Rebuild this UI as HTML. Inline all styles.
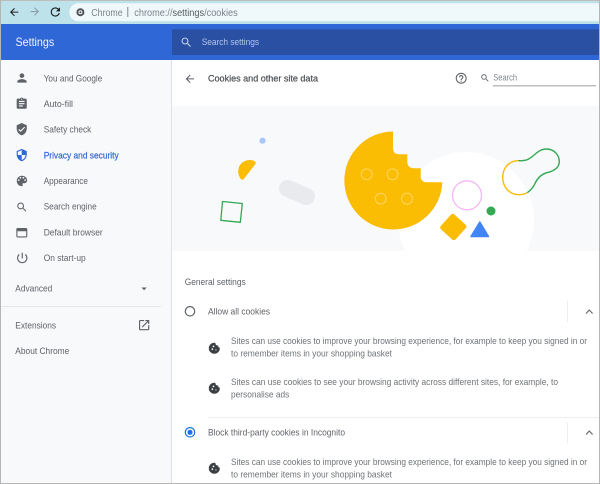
<!DOCTYPE html>
<html><head><meta charset="utf-8"><style>
html,body{margin:0;padding:0;width:600px;height:484px;overflow:hidden;background:#fff}
svg{display:block;position:absolute;left:0;top:0}
text{font-family:"Liberation Sans",sans-serif;font-size:9.4px;fill:#5f6368}
.t{filter:blur(.3px)}
</style></head><body>
<svg width="600" height="484" viewBox="0 0 600 484" xmlns="http://www.w3.org/2000/svg">
<defs>
<clipPath id="ill"><rect x="172" y="106" width="427" height="145"/></clipPath>
<path id="cookie" d="M21.95,10.99c-1.79-0.03-3.7-1.95-2.68-4.22c-2.98,1-5.77-1.59-5.19-4.56C6.95,0.71,2,6.58,2,12c0,5.52,4.48,10,10,10 C17.89,22,22.7,16.91,21.95,10.99z M8.5,15C7.67,15,7,14.33,7,13.5S7.67,12,8.5,12s1.5,0.67,1.5,1.5S9.33,15,8.5,15z M10.5,10 C9.67,10,9,9.33,9,8.5S9.67,7,10.5,7S12,7.67,12,8.5S11.33,10,10.5,10z M15,16c-0.55,0-1-0.45-1-1c0-0.55,0.45-1,1-1s1,0.45,1,1 C16,15.55,15.55,16,15,16z"/>
<path id="back" d="M20 11H7.83l5.59-5.59L12 4l-8 8 8 8 1.41-1.41L7.83 13H20v-2z"/>
<path id="srch" d="M15.5 14h-.79l-.28-.27C15.41 12.59 16 11.11 16 9.5 16 5.91 13.09 3 9.5 3S3 5.91 3 9.5 5.91 16 9.5 16c1.61 0 3.09-.59 4.23-1.57l.27.28v.79l5 4.99L20.49 19l-4.99-5zm-6 0C7.01 14 5 11.99 5 9.5S7.01 5 9.5 5 14 7.01 14 9.5 11.99 14 9.5 14z"/>
</defs>

<!-- frame backgrounds -->
<rect width="600" height="484" fill="#fff"/>
<rect x="0" y="0" width="600" height="24" fill="#bde2ea"/>
<rect x="69.300" y="3.300" width="540" height="18" rx="9" fill="#eff8fb"/>
<rect x="1" y="24" width="598" height="36" fill="#3067d6"/>
<rect x="172" y="29.300" width="427" height="25.700" fill="#2a50a3"/>
<rect x="1" y="60" width="170" height="424" fill="#f8f9fb"/>
<rect x="171" y="60" width="1" height="424" fill="#dfe1e5"/>
<rect x="172" y="106" width="427" height="145" fill="#f8f9fb"/>

<!-- toolbar icons -->
<use href="#back" transform="translate(7.900,5.900) scale(.52)" fill="#202124"/>
<use href="#back" transform="translate(41.100,17.800) scale(-.52,-.52)" fill="#8a9da6"/>
<path transform="translate(48.400,5) scale(.58)" d="M17.65 6.35C16.2 4.9 14.21 4 12 4c-4.42 0-7.99 3.58-7.99 8s3.57 8 7.99 8c3.73 0 6.84-2.55 7.73-6h-2.08c-.82 2.33-3.04 4-5.65 4-3.31 0-6-2.69-6-6s2.69-6 6-6c1.66 0 3.14.69 4.22 1.78L13 11h7V4l-2.35 2.35z" fill="#202124"/>
<circle cx="80.400" cy="12.200" r="3" fill="none" stroke="#4f5357" stroke-width="2"/>
<circle cx="80.400" cy="12.200" r="1" fill="#4f5357"/>
<rect x="127.300" y="7" width="1" height="10" fill="#80868b"/>

<!-- sidebar icons -->
<g fill="#5f6368">
<path transform="translate(15,71) scale(.58)" d="M12 12c2.21 0 4-1.79 4-4s-1.79-4-4-4-4 1.79-4 4 1.79 4 4 4zm0 2c-2.67 0-8 1.34-8 4v2h16v-2c0-2.66-5.33-4-8-4z"/>
<path transform="translate(15,97) scale(.56)" d="M19 3h-4.18C14.4 1.84 13.3 1 12 1c-1.3 0-2.4.84-2.82 2H5c-1.1 0-2 .9-2 2v14c0 1.1.9 2 2 2h14c1.1 0 2-.9 2-2V5c0-1.1-.9-2-2-2zm-7 0c.55 0 1 .45 1 1s-.45 1-1 1-1-.45-1-1 .45-1 1-1zm2 14H7v-2h7v2zm3-4H7v-2h10v2zm0-4H7V7h10v2z"/>
<path transform="translate(15,122.500) scale(.56)" d="M12 1L3 5v6c0 5.55 3.84 10.74 9 12 5.16-1.26 9-6.45 9-12V5l-9-4zm-2 16l-4-4 1.41-1.41L10 14.17l6.59-6.59L18 9l-8 8z"/>
<path transform="translate(15,148.300) scale(.56)" fill="#2f66d8" d="M12 1L3 5v6c0 5.55 3.84 10.74 9 12 5.16-1.26 9-6.45 9-12V5l-9-4zm0 10.99h7c-.53 4.12-3.28 7.79-7 8.94V12H5V6.3l7-3.11v8.8z"/>
<path transform="translate(15,174) scale(.58)" d="M12 3c-4.97 0-9 4.03-9 9s4.03 9 9 9c.83 0 1.5-.67 1.5-1.5 0-.39-.15-.74-.39-1.01-.23-.26-.38-.61-.38-.99 0-.83.67-1.5 1.5-1.5H16c2.76 0 5-2.24 5-5 0-4.42-4.03-8-9-8zm-5.5 9c-.83 0-1.5-.67-1.5-1.5S5.67 9 6.5 9 8 9.67 8 10.5 7.33 12 6.5 12zm3-4C8.67 8 8 7.33 8 6.5S8.67 5 9.5 5s1.5.67 1.5 1.5S10.33 8 9.5 8zm5 0c-.83 0-1.5-.67-1.5-1.5S13.67 5 14.5 5s1.5.67 1.5 1.5S15.33 8 14.5 8zm3 4c-.83 0-1.5-.67-1.5-1.5S16.67 9 17.5 9s1.5.67 1.5 1.5-.67 1.5-1.5 1.5z"/>
<use href="#srch" transform="translate(15.700,201) scale(.52)"/>
<path fill-rule="evenodd" d="M17.500 228h8.600a1.200 1.200 0 0 1 1.200 1.200v7.100a1.200 1.200 0 0 1-1.200 1.200H17.500a1.200 1.200 0 0 1-1.200-1.200v-7.100a1.200 1.200 0 0 1 1.200-1.200zM17.400 231.300v5.100h8.800v-5.100z"/>
<path transform="translate(15.300,251) scale(.58)" d="M13 3h-2v10h2V3zm4.830 2.170l-1.420 1.420C17.990 7.860 19 9.810 19 12c0 3.870-3.130 7-7 7s-7-3.130-7-7c0-2.190 1.010-4.140 2.580-5.420L6.170 5.170C4.230 6.820 3 9.260 3 12c0 4.970 4.030 9 9 9s9-4.030 9-9c0-2.740-1.230-5.180-3.170-6.830z"/>
<path d="M141.500 287.500h5.200l-2.600 2.800z"/>
<path transform="translate(137.300,318.300) scale(.57)" d="M19 19H5V5h7V3H5c-1.110 0-2 .9-2 2v14c0 1.100.89 2 2 2h14c1.100 0 2-.9 2-2v-7h-2v7zM14 3v2h3.590l-9.830 9.830 1.410 1.410L19 6.410V10h2V3h-7z"/>
</g>
<rect x="1" y="306" width="160" height="1" fill="#e5e7ea"/>

<!-- header search icon -->
<use href="#srch" transform="translate(180,36) scale(.53)" fill="#c7d6f2"/>

<!-- subpage header -->
<use href="#back" transform="translate(183.600,72.600) scale(.52)" fill="#5f6368"/>
<path transform="translate(454.600,71.700) scale(.55)" fill="#5f6368" d="M11 18h2v-2h-2v2zm1-16C6.480 2 2 6.480 2 12s4.480 10 10 10 10-4.480 10-10S17.520 2 12 2zm0 18c-4.410 0-8-3.590-8-8s3.590-8 8-8 8 3.590 8 8-3.590 8-8 8zm0-14c-2.210 0-4 1.790-4 4h2c0-1.100.9-2 2-2s2 .9 2 2c0 2-3 1.750-3 5h2c0-2.250 3-2.500 3-5 0-2.210-1.790-4-4-4z"/>
<use href="#srch" transform="translate(480,73) scale(.42)" fill="#5f6368"/>
<rect x="493" y="85" width="103" height="1.500" fill="#bdbdbd"/>

<!-- illustration -->
<g clip-path="url(#ill)">
<circle cx="466" cy="220" r="68" fill="#fff"/>
<circle cx="262.500" cy="140.700" r="3.100" fill="#a8c7fa"/>
<path d="M255 161.500C256 162.500 256 163.500 255.200 164.300L244 178.800C243 180 241.500 180 240.800 179C238.500 175.500 237.500 172 238.700 168C240 163 245 160 250 160C252 160 254 160.500 255 161.500z" fill="#fbbc04"/>
<path d="M287.500 188.500L306.500 196.500" stroke="#e8eaed" stroke-width="17" stroke-linecap="round" fill="none"/>
<path d="M222.500 201.500L242.300 203.500L240.300 222.300L220.800 220.300z" stroke="#34a853" stroke-width="1.300" stroke-linejoin="round" fill="none"/>
<path d="M393 131.500V148C393 151.500 394.500 154.300 399 154.300H407.300V161.500C407.300 165.500 409.500 168.300 414 168.300H420.700V176.500C420.700 180 423 182.300 427 182.300H442.300A49 49 0 1 1 393 131.500z" fill="#fbbc04"/>
<g fill="none" stroke="#fdd663" stroke-width="1">
<circle cx="366.700" cy="174.300" r="5.400"/><circle cx="392.500" cy="174.300" r="5.400"/>
<circle cx="380.700" cy="198.700" r="5.400"/><circle cx="407" cy="198.700" r="5.400"/>
</g>
<circle cx="467" cy="195.300" r="14.500" fill="#fff" stroke="#f4b6f6" stroke-width="1.300"/>
<circle cx="491" cy="211" r="4.500" fill="#34a853"/>
<rect x="443.300" y="217" width="20" height="20" rx="2.500" transform="rotate(42 453.300 227)" fill="#fbbc04"/>
<path d="M479.800 222L488.500 236.500H471z" fill="#4285f4" stroke="#4285f4" stroke-width="1.500" stroke-linejoin="round"/>
<path d="M527.300 192.700C531 190 533.500 187 535 183.500C537 179 541 174.500 546.700 172.700C553 171.500 559.300 168 559.300 161.700C559.300 154.500 553.500 149 546.700 149C541 149 537.500 152 533.500 155.500C530 158.500 527 160.700 522 160.700L518.300 160.700" fill="none" stroke="#34a853" stroke-width="1.400"/>
<path d="M518.300 160.700C509 160.700 502.700 168 502.700 177.300C502.700 187.500 510 194.700 518.500 194.700C522 194.700 525 194 527.300 192.700" fill="none" stroke="#fbbc04" stroke-width="1.400"/>
</g>

<!-- settings rows -->
<circle cx="190" cy="311.300" r="4.700" fill="none" stroke="#5f6368" stroke-width="1.200"/>
<circle cx="190" cy="432.300" r="4.700" fill="none" stroke="#1a73e8" stroke-width="1.200"/>
<circle cx="190" cy="432.300" r="2.600" fill="#1a73e8"/>
<rect x="567" y="301" width="1" height="21" fill="#eceef0"/>
<rect x="567" y="423" width="1" height="20" fill="#eceef0"/>
<path d="M586 313.500L589.300 310L592.600 313.500" fill="none" stroke="#5f6368" stroke-width="1.100"/>
<path d="M586 434.500L589.300 431L592.600 434.500" fill="none" stroke="#5f6368" stroke-width="1.100"/>
<rect x="208" y="417" width="391" height="1" fill="#eceef0"/>
<g fill="#3c4043">
<use href="#cookie" transform="translate(207.700,341.700) scale(.55)"/>
<use href="#cookie" transform="translate(207.700,381.700) scale(.55)"/>
<use href="#cookie" transform="translate(207.700,461.700) scale(.55)"/>
</g>

<!-- text -->
<g class="t">
<text x="15.500" y="45.800" style="font-size:12px;fill:#eef3fc" textLength="38.700" lengthAdjust="spacingAndGlyphs">Settings</text>
<text x="201.700" y="44.800" style="fill:#b3c6ec" textLength="57.300" lengthAdjust="spacingAndGlyphs">Search settings</text>
<text x="91.300" y="15.800" style="font-size:10.500px;fill:#7c8388" textLength="31.400" lengthAdjust="spacingAndGlyphs">Chrome</text>
<text x="134.300" y="15.800" style="font-size:10.500px;fill:#7c8388" textLength="103.400" lengthAdjust="spacingAndGlyphs">chrome://<tspan style="fill:#555a5e">settings</tspan>/cookies</text>

<text x="43.700" y="81.300" textLength="58.600" lengthAdjust="spacingAndGlyphs">You and Google</text>
<text x="43.700" y="107" textLength="29.300" lengthAdjust="spacingAndGlyphs">Auto-fill</text>
<text x="43.700" y="132.700" textLength="47.600" lengthAdjust="spacingAndGlyphs">Safety check</text>
<text x="43.700" y="158.300" style="fill:#2f66d8;stroke:#2f66d8;stroke-width:.2px" textLength="75" lengthAdjust="spacingAndGlyphs">Privacy and security</text>
<text x="43.700" y="184" textLength="44.300" lengthAdjust="spacingAndGlyphs">Appearance</text>
<text x="43.700" y="209.700" textLength="53" lengthAdjust="spacingAndGlyphs">Search engine</text>
<text x="43.700" y="235.300" textLength="59" lengthAdjust="spacingAndGlyphs">Default browser</text>
<text x="43.700" y="261" textLength="42" lengthAdjust="spacingAndGlyphs">On start-up</text>
<text x="15.300" y="291.700" textLength="37" lengthAdjust="spacingAndGlyphs">Advanced</text>
<text x="15.300" y="328.300" textLength="40.700" lengthAdjust="spacingAndGlyphs">Extensions</text>
<text x="15.300" y="354" textLength="54" lengthAdjust="spacingAndGlyphs">About Chrome</text>

<text x="208" y="81.700" style="fill:#4a4e52;stroke:#4a4e52;stroke-width:.2px" textLength="110" lengthAdjust="spacingAndGlyphs">Cookies and other site data</text>
<text x="493.300" y="80.300" style="fill:#80868b" textLength="23.700" lengthAdjust="spacingAndGlyphs">Search</text>

<text x="184.700" y="285" textLength="61" lengthAdjust="spacingAndGlyphs">General settings</text>
<text x="208" y="314.300" textLength="62" lengthAdjust="spacingAndGlyphs">Allow all cookies</text>
<text x="231" y="344" style="fill:#6f7377" textLength="356" lengthAdjust="spacingAndGlyphs">Sites can use cookies to improve your browsing experience, for example to keep you signed in or</text>
<text x="231" y="356.700" style="fill:#6f7377" textLength="161" lengthAdjust="spacingAndGlyphs">to remember items in your shopping basket</text>
<text x="231" y="385" style="fill:#6f7377" textLength="327" lengthAdjust="spacingAndGlyphs">Sites can use cookies to see your browsing activity across different sites, for example, to</text>
<text x="231" y="397.700" style="fill:#6f7377" textLength="58.300" lengthAdjust="spacingAndGlyphs">personalise ads</text>
<text x="208" y="435.300" textLength="137" lengthAdjust="spacingAndGlyphs">Block third-party cookies in Incognito</text>
<text x="231" y="465" style="fill:#6f7377" textLength="356" lengthAdjust="spacingAndGlyphs">Sites can use cookies to improve your browsing experience, for example to keep you signed in or</text>
<text x="231" y="477.700" style="fill:#6f7377" textLength="161" lengthAdjust="spacingAndGlyphs">to remember items in your shopping basket</text>
</g>

<!-- outer border -->
<rect x="0" y="0" width="600" height="1" fill="#bdbdbd"/>
<rect x="0" y="0" width="1" height="484" fill="#b5b5b5"/>
<rect x="599" y="0" width="1" height="484" fill="#b5b5b5"/>
<rect x="0" y="483" width="600" height="1" fill="#b5b5b5"/>
</svg>
</body></html>
